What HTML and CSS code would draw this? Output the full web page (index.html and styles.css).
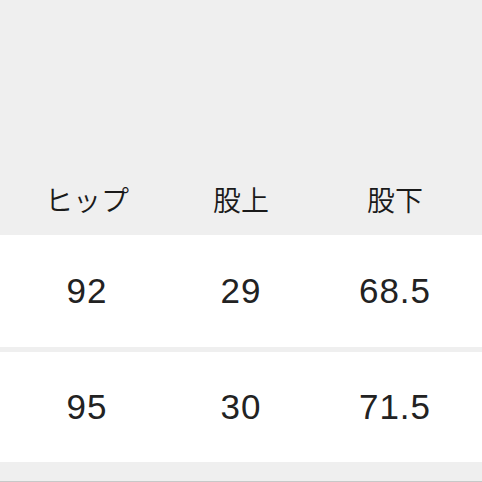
FILE: index.html
```html
<!DOCTYPE html>
<html lang="ja">
<head>
<meta charset="utf-8">
<link rel="stylesheet" href="styles.css">
</head>
<body>
<div class="table">
  <div class="row head">
    <div class="cell">ヒップ</div>
    <div class="cell">股上</div>
    <div class="cell">股下</div>
  </div>
  <div class="row data first">
    <div class="cell">92</div>
    <div class="cell">29</div>
    <div class="cell">68.5</div>
  </div>
  <div class="row data second">
    <div class="cell">95</div>
    <div class="cell">30</div>
    <div class="cell">71.5</div>
  </div>
  <div class="foot"></div>
</div>
</body>
</html>
```
FILE: styles.css
```css
html, body {
  margin: 0;
  padding: 0;
  background: #efefef;
}
.table {
  width: 482px;
  height: 482px;
  display: flex;
  flex-direction: column;
  color: #1a1a1a;
}
.row {
  display: grid;
  grid-template-columns: repeat(3, 1fr);
  padding: 0 10px;
  align-items: center;
}
.cell {
  text-align: center;
}
.head {
  height: 235px;
  align-items: end;
  padding-bottom: 16px;
  box-sizing: border-box;
  font-family: "Noto Sans CJK JP", sans-serif;
  font-weight: 350;
  font-size: 28px;
}
.data {
  background: #ffffff;
  font-family: "Liberation Sans", Arial, sans-serif;
  font-size: 35px;
  letter-spacing: 1px;
  color: #222;
}
.first {
  height: 112px;
  margin-bottom: 5px;
}
.second {
  height: 110px;
}
.foot {
  flex: 1;
  border-bottom: 1px solid #c8c8c8;
}
```
